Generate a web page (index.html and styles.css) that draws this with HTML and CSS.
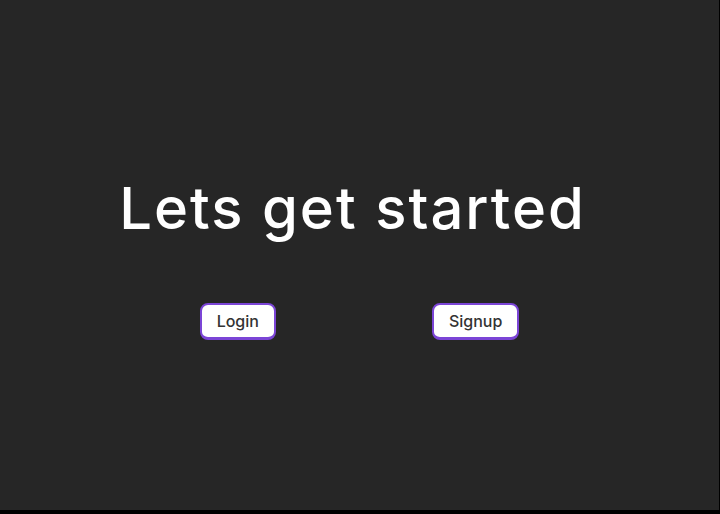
FILE: index.html
```html
<!DOCTYPE html>
<html lang="en">
<head>
<meta charset="utf-8">
<title>Lets get started</title>
<link rel="stylesheet" href="styles.css">
</head>
<body>
<main class="screen">
  <h1 class="title">Lets get started</h1>
  <div class="actions">
    <button class="btn btn-login">Login</button>
    <button class="btn btn-signup">Signup</button>
  </div>
</main>
</body>
</html>
```

FILE: styles.css
```css
html, body {
  margin: 0;
  padding: 0;
  background: #000;
  height: 100%;
}
.screen {
  width: 719px;
  height: 510px;
  background: #262626;
  display: flex;
  flex-direction: column;
  align-items: center;
  box-sizing: border-box;
  padding-top: 170px;
}
.title {
  margin: 0 14px 0 0;
  font-family: Inter, "Noto Sans", sans-serif;
  font-weight: 500;
  font-size: 58px;
  line-height: 76px;
  color: #fff;
  letter-spacing: 2px;
}
.actions {
  margin-top: 57px;
  margin-left: 0;
  display: flex;
  gap: 156px;
}
.btn {
  font-family: Inter, Roboto, sans-serif;
  font-weight: 500;
  font-size: 16px;
  color: #333;
  background: #fff;
  border: 2px solid #7b45d6;
  border-bottom-width: 3px;
  border-radius: 8px;
  height: 37px;
  padding: 0 15px;
  box-sizing: border-box;
}
```
